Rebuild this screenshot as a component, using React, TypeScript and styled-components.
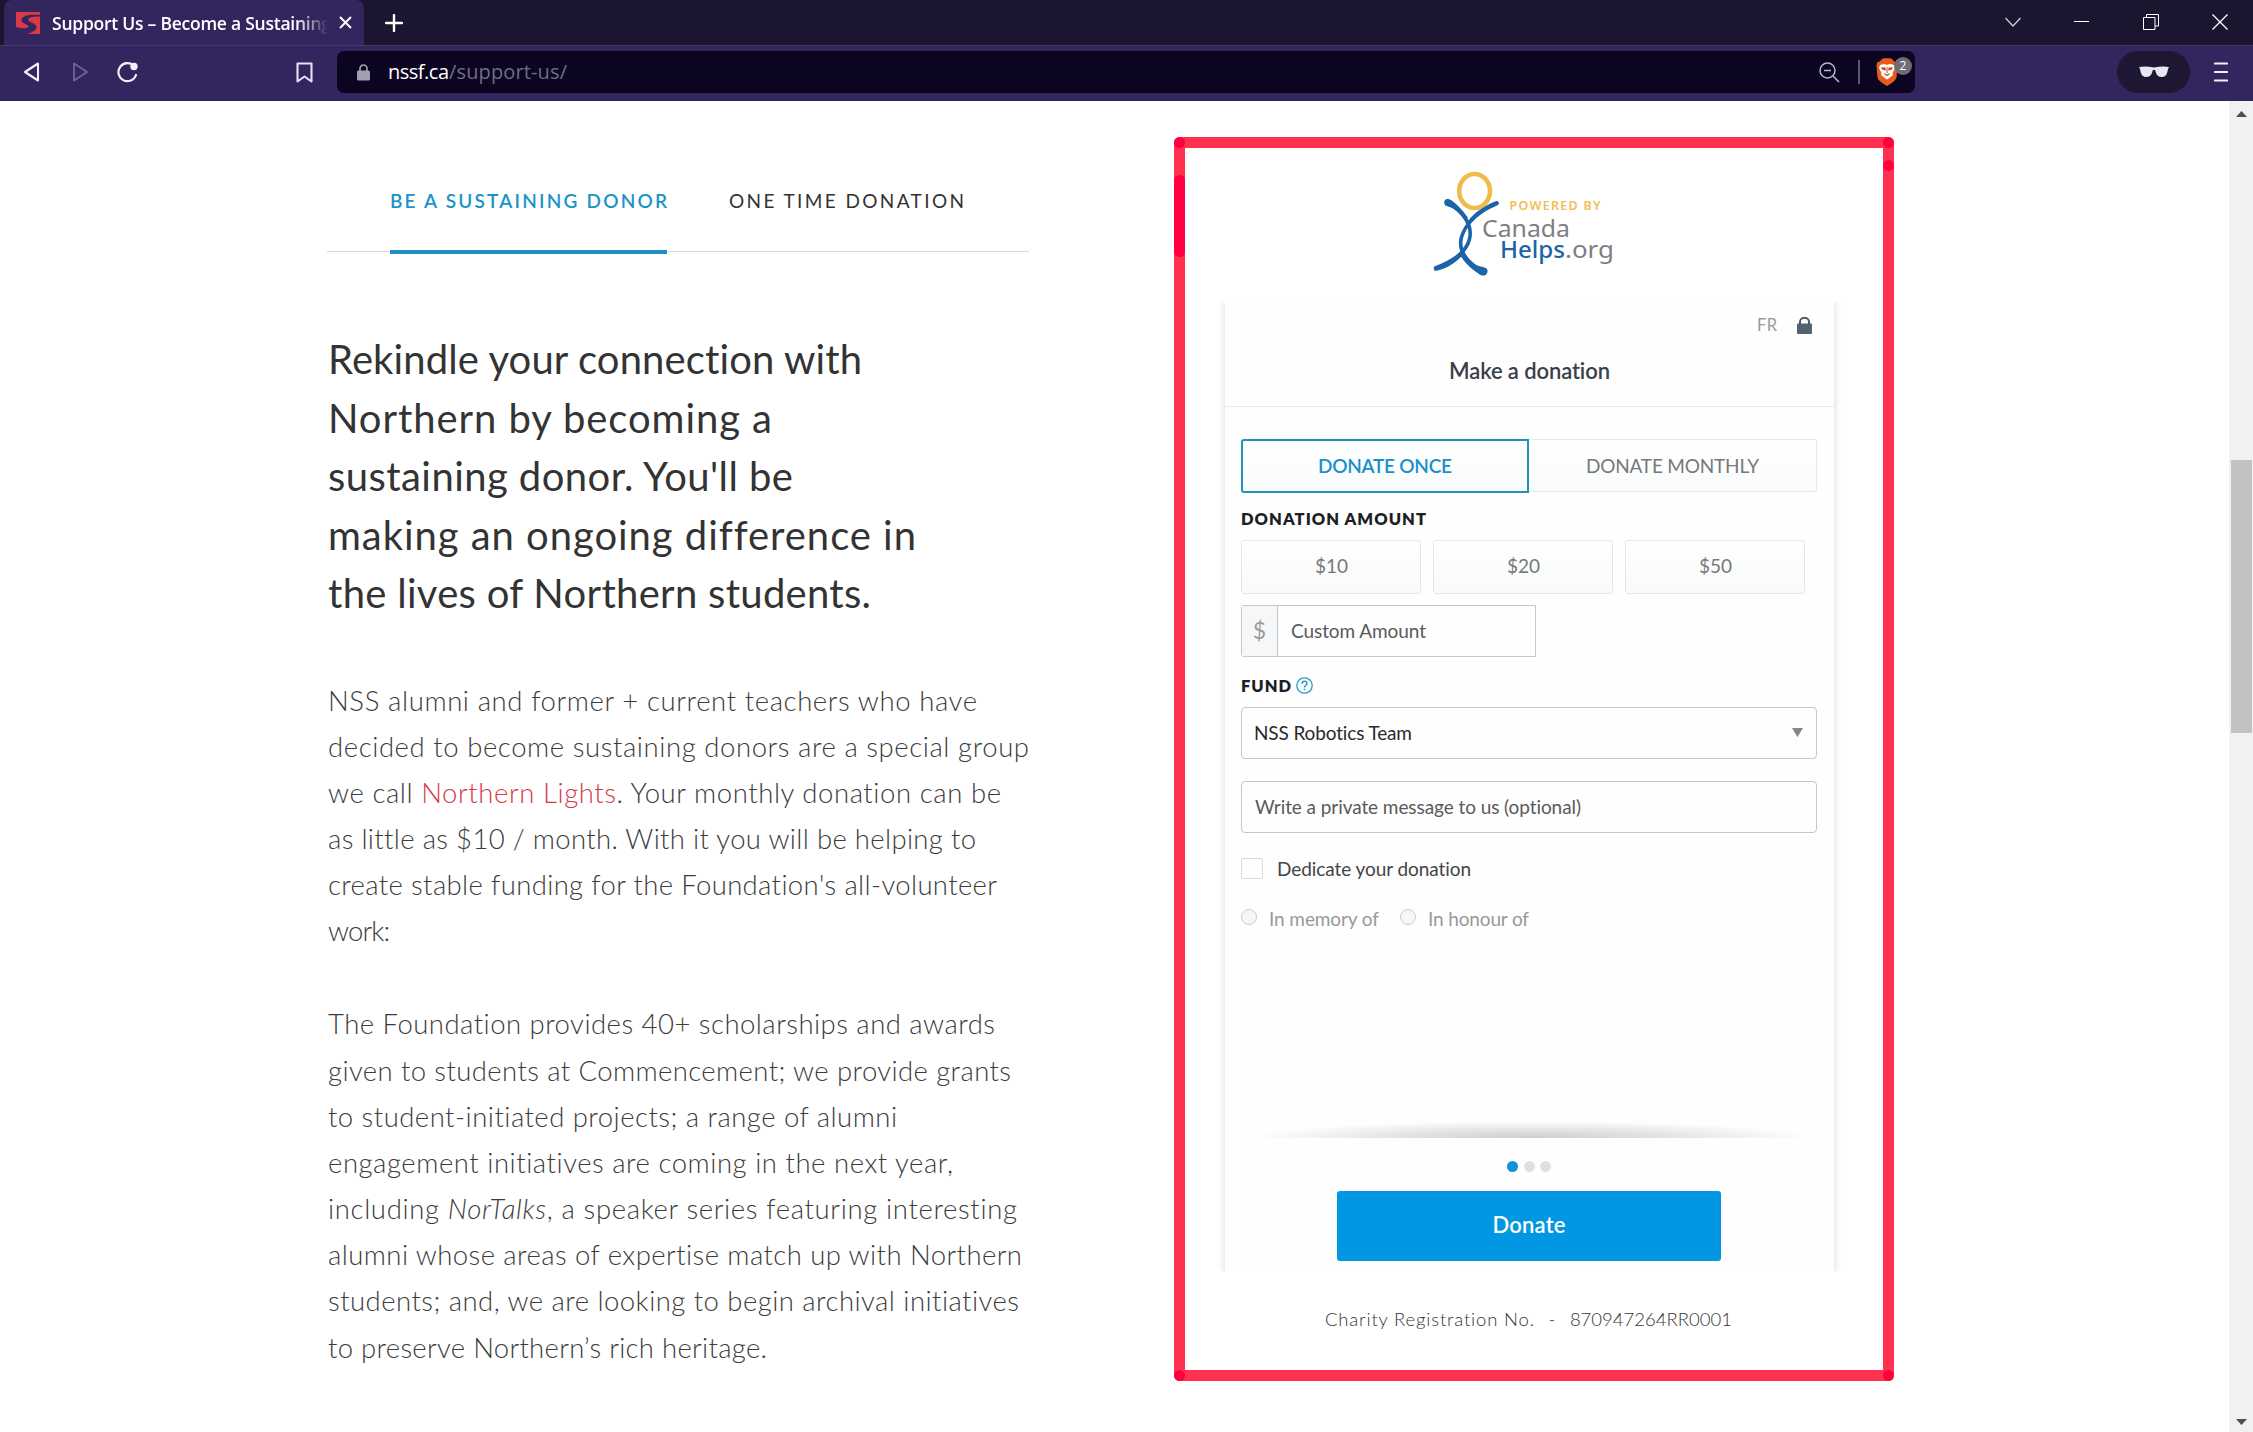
import React, { useLayoutEffect, useRef, useState } from 'react';
import styled, { createGlobalStyle } from 'styled-components';

const Global = createGlobalStyle`
  * { box-sizing: border-box; }
  html, body { margin: 0; padding: 0; background: #fff; overflow: hidden; }
  body { font-family: Lato, "Open Sans", sans-serif; }
  h1, h2, h3, p { margin: 0; font-weight: inherit; }
  svg { display: block; flex: none; }
`;

/* Text run tracked out (or in) so that it fills a given measure. */
const Run = styled.span`
  display: inline-block;
  white-space: nowrap;
  font-variant-ligatures: none;
  flex: none;
`;

function Fit({ width, children }: { width: number; children: React.ReactNode }) {
  const ref = useRef<HTMLSpanElement>(null);
  const [tracking, setTracking] = useState(0);
  useLayoutEffect(() => {
    const el = ref.current;
    if (!el) return;
    const count = (el.textContent || '').length;
    el.style.letterSpacing = '0px';
    el.style.marginRight = '0px';
    const natural = el.getBoundingClientRect().width;
    const next = (width - natural) / Math.max(1, count - 1);
    el.style.letterSpacing = `${next}px`;
    el.style.marginRight = `${-next}px`;
    setTracking(next);
  }, [width]);
  return (
    <Run ref={ref} style={{ letterSpacing: tracking, marginRight: -tracking }}>
      {children}
    </Run>
  );
}

const Window = styled.div`
  width: 2253px;
  height: 1432px;
  display: flex;
  flex-direction: column;
  overflow: hidden;
  background: #fff;
`;

/* ---------- browser chrome ---------- */
const TabStrip = styled.header`
  height: 45px;
  flex: none;
  display: flex;
  align-items: center;
  background: #1b1530;
  padding-left: 4px;
`;
const BrowserTab = styled.div`
  width: 360px;
  height: 45px;
  border-radius: 8px 8px 0 0;
  background: #33265f;
  display: flex;
  align-items: center;
  padding: 0 12px;
`;
const TabTitle = styled.div`
  width: 280px;
  margin-left: 12px;
  font: 600 17.5px/26px "Open Sans", "Noto Sans", sans-serif;
  color: #fff;
  mask-image: linear-gradient(90deg, #000 244px, transparent 276px);
`;
const TabClose = styled.svg`
  margin-left: 7px;
`;
const NewTab = styled.svg`
  margin-left: 21px;
`;
const WindowButtons = styled.div`
  margin-left: auto;
  display: flex;
  align-items: center;
  gap: 53px;
  padding-right: 25px;
  margin-top: -2px;
`;
const Toolbar = styled.div`
  height: 56px;
  flex: none;
  display: flex;
  align-items: center;
  background: #33265f;
  border-top: 1px solid #42366b;
  border-bottom: 1px solid #30255a;
  padding: 0 25px 2px 23px;
`;
const Nav = styled.div`
  width: 314px;
  display: flex;
  align-items: center;
`;
const Forward = styled.svg`
  margin-left: 32px;
`;
const Reload = styled.svg`
  margin-left: 28px;
`;
const Bookmark = styled.svg`
  margin-left: 157px;
`;
const AddressBar = styled.div`
  width: 1578px;
  height: 42px;
  border-radius: 7px;
  background: #0b0522;
  display: flex;
  align-items: center;
  padding: 0 15px 0 20px;
`;
const Address = styled.div`
  margin-left: 18px;
  flex: 1;
  display: flex;
  font: 400 20px/30px "Open Sans", "Noto Sans", sans-serif;
  color: #716d84;
`;
const Host = styled.span`
  color: #fff;
`;
const Rule = styled.div`
  width: 2px;
  height: 24px;
  margin: 0 16px 0 18px;
  background: #5d5970;
`;
const Shield = styled.div`
  position: relative;
  width: 24px;
  height: 28px;
`;
const ShieldCount = styled.span`
  position: absolute;
  left: 18px;
  top: -1px;
  width: 18px;
  height: 18px;
  border-radius: 9px;
  background: #6d6d75;
  color: #fff;
  text-align: center;
  font: 400 12px/17px "Open Sans", sans-serif;
`;
const Private = styled.div`
  margin-left: auto;
  width: 73px;
  height: 42px;
  border-radius: 21px;
  background: #1d1733;
  display: flex;
  align-items: center;
  justify-content: center;
`;
const MenuIcon = styled.svg`
  margin-left: 24px;
`;

/* ---------- page ---------- */
const Viewport = styled.main`
  flex: 1;
  display: flex;
  align-items: flex-start;
  padding-left: 327px;
`;
const Story = styled.section`
  width: 702px;
  color: #333;
`;
const Tabs = styled.nav`
  height: 151px;
  border-bottom: 1px solid #d8d8d8;
  display: flex;
  align-items: flex-end;
  padding-left: 63px;
`;
const Tab = styled.div<{ $active?: boolean }>`
  height: ${(p) => (p.$active ? 65 : 62)}px;
  margin-bottom: ${(p) => (p.$active ? -3 : 0)}px;
  margin-left: ${(p) => (p.$active ? 0 : 62)}px;
  border-bottom: ${(p) => (p.$active ? '4px solid #1f8fc1' : 'none')};
  color: ${(p) => (p.$active ? '#1b93c8' : '#333')};
  font-size: 19px;
  line-height: 24px;
  font-weight: ${(p) => (p.$active ? 600 : 400)};
`;
const Heading = styled.h1`
  margin-top: 78px;
  padding-left: 1px;
  font-size: 40px;
  line-height: 58.5px;
  font-weight: 400;
`;
const Paragraph = styled.p<{ $gap: number }>`
  margin-top: ${(p) => p.$gap}px;
  padding-left: 1px;
  font-size: 27.5px;
  line-height: 46.15px;
  font-weight: 300;
  color: #3c3c3c;
`;
const Line = styled.span`
  display: block;
`;
const Accent = styled.a`
  color: #d53a47;
`;

/* Red marker outline around the widget */
const Marked = styled.section`
  position: relative;
  width: 720px;
  height: 1244px;
  margin: 36px 0 0 145px;
  border: 11px solid #ff3150;
  border-radius: 6px;
`;
const Overlap = styled.i<{ $x: number; $y: number; $h?: number }>`
  position: absolute;
  left: ${(p) => p.$x - 11}px;
  top: ${(p) => p.$y - 11}px;
  width: 11px;
  height: ${(p) => p.$h || 11}px;
  border-radius: 6px;
  background: #ff0040;
`;
const LogoArea = styled.div`
  height: 154px;
  padding: 22px 0 0 248px;
`;
const Card = styled.div`
  width: 609px;
  height: 970px;
  margin-left: 40px;
  box-shadow: 0 0 8px rgba(0, 0, 0, 0.16);
  clip-path: inset(0 -9px 0 -9px);
  background: #fefefe;
`;
const CardHead = styled.div`
  height: 105px;
  border-bottom: 1px solid #e9ebec;
  padding-top: 13px;
`;
const Corner = styled.div`
  height: 20px;
  display: flex;
  justify-content: flex-end;
  align-items: center;
  gap: 20px;
  padding-right: 22px;
  font-size: 16.5px;
  line-height: 20px;
  color: #999;
`;
const CardTitle = styled.h2`
  margin-top: 21px;
  text-align: center;
  font-size: 22px;
  line-height: 30px;
  font-weight: 600;
  color: #3b3f49;
`;
const Form = styled.div`
  width: 576px;
  margin-left: 16px;
  padding-top: 32px;
  font-size: 19px;
  color: #444;
`;
const Toggle = styled.div`
  display: flex;
  height: 54px;
`;
const Choice = styled.div<{ $on?: boolean }>`
  width: 288px;
  height: ${(p) => (p.$on ? 54 : 53)}px;
  padding-bottom: ${(p) => (p.$on ? 2 : 0)}px;
  display: flex;
  align-items: center;
  justify-content: center;
  border: ${(p) => (p.$on ? '2px solid #1f93b8' : '1px solid #e5e8e9')};
  border-left-width: ${(p) => (p.$on ? 2 : 0)}px;
  border-radius: ${(p) => (p.$on ? '3px 0 0 3px' : '0 3px 3px 0')};
  background: linear-gradient(#fff, #fafbfc);
  color: ${(p) => (p.$on ? '#178fce' : '#75797c')};
  font-weight: ${(p) => (p.$on ? 600 : 400)};
`;
const FieldLabel = styled.h3<{ $top: number }>`
  margin-top: ${(p) => p.$top}px;
  margin-bottom: 11.5px;
  height: 20px;
  display: flex;
  align-items: center;
  gap: 5px;
  font-size: 16.5px;
  line-height: 20px;
  font-weight: 800;
  color: #1c1f24;
`;
const Amounts = styled.div`
  display: flex;
  gap: 12px;
`;
const Amount = styled.div`
  width: 180px;
  height: 54px;
  display: flex;
  align-items: center;
  justify-content: center;
  padding: 0 0 3px 1px;
  border: 1px solid #e4e7e8;
  border-radius: 3px;
  background: linear-gradient(#fff, #f9fafb);
  color: #75797c;
`;
const Custom = styled.div`
  width: 295px;
  height: 52px;
  margin-top: 11px;
  display: flex;
  align-items: center;
  border: 1px solid #c4c7c9;
  border-radius: 3px 0 0 3px;
  color: #5a5a5a;
`;
const CustomHint = styled.span`
  padding-bottom: 2px;
`;
const Currency = styled.div`
  width: 36px;
  height: 50px;
  margin-right: 13px;
  border-right: 1px solid #c4c7c9;
  background: #f6f7f9;
  display: flex;
  align-items: center;
  justify-content: center;
  padding-bottom: 2px;
  font-size: 23px;
  color: #9a9da0;
`;
const Field = styled.div<{ $top: number; $left: number; $color: string }>`
  margin-top: ${(p) => p.$top}px;
  height: 52px;
  border: 1px solid #c4c7c9;
  border-radius: 4px;
  display: flex;
  align-items: center;
  justify-content: space-between;
  padding: 0 13px 2px ${(p) => p.$left}px;
  color: ${(p) => p.$color};
`;
const CheckRow = styled.label`
  margin-top: 25px;
  height: 21px;
  display: flex;
  align-items: center;
  gap: 14px;
`;
const Box = styled.span`
  width: 22px;
  height: 21px;
  border: 1px solid #d8dadb;
  border-radius: 2px;
`;
const RadioRow = styled.div`
  margin-top: 29px;
  height: 18px;
  display: flex;
  align-items: center;
  color: #97999b;
`;
const Radio = styled.span<{ $left?: number }>`
  width: 16px;
  height: 16px;
  flex: none;
  margin-left: ${(p) => p.$left || 0}px;
  margin-right: 12px;
  border: 1px solid #cbcbcb;
  border-radius: 50%;
  background: #f6f6f6;
`;
const RadioText = styled.span`
  margin-top: 3px;
`;
const Curl = styled.div`
  width: 566px;
  height: 17px;
  margin: 195px 0 0 8px;
  background: radial-gradient(ellipse 50% 100% at 50% 100%, rgba(0, 0, 0, 0.19), rgba(0, 0, 0, 0.1) 50%, rgba(0, 0, 0, 0.04) 80%, transparent);
`;
const Dots = styled.div`
  margin-top: 23px;
  display: flex;
  justify-content: center;
  gap: 5.5px;
`;
const Dot = styled.i<{ $on?: boolean }>`
  width: 11px;
  height: 11px;
  border-radius: 50%;
  background: ${(p) => (p.$on ? '#0e94d8' : '#dfe1e1')};
`;
const Donate = styled.div`
  width: 384px;
  height: 70px;
  margin: 19px auto 0;
  padding-bottom: 3px;
  border-radius: 3px;
  background: #0297e3;
  color: #fff;
  display: flex;
  align-items: center;
  justify-content: center;
  font-size: 22px;
  font-weight: 600;
`;
const Charity = styled.div`
  margin: 35px 0 0 140px;
  display: flex;
  gap: 14.5px;
  font-size: 18.5px;
  line-height: 24px;
  font-weight: 300;
  color: #333;
`;
const Scrollbar = styled.aside`
  width: 24px;
  height: 1331px;
  margin-left: auto;
  background: #f1f1f1;
  display: flex;
  flex-direction: column;
  align-items: center;
  justify-content: space-between;
  padding: 10px 0 7px;
`;
const Thumb = styled.div`
  width: 21px;
  height: 273px;
  margin-bottom: 343px;
  background: #c1c1c1;
`;

const headingLines: [string, number][] = [
  ['Rekindle your connection with', 534],
  ['Northern by becoming a', 444],
  ["sustaining donor. You'll be", 465],
  ['making an ongoing difference in', 588],
  ['the lives of Northern students.', 543],
];

const introLines: [React.ReactNode, number][] = [
  ['NSS alumni and former + current teachers who have', 649],
  ['decided to become sustaining donors are a special group', 701],
  [<>we call <Accent>Northern Lights</Accent>. Your monthly donation can be</>, 673],
  ['as little as $10 / month. With it you will be helping to', 648],
  ["create stable funding for the Foundation's all-volunteer", 669],
  ['work:', 62],
];

const aboutLines: [React.ReactNode, number][] = [
  ['The Foundation provides 40+ scholarships and awards', 667],
  ['given to students at Commencement; we provide grants', 683],
  ['to student-initiated projects; a range of alumni', 569],
  ['engagement initiatives are coming in the next year,', 625],
  [<>including <em>NorTalks</em>, a speaker series featuring interesting</>, 689],
  ['alumni whose areas of expertise match up with Northern', 694],
  ['students; and, we are looking to begin archival initiatives', 691],
  ['to preserve Northern’s rich heritage.', 439],
];

const Lines = ({ items }: { items: [React.ReactNode, number][] }) => (
  <>
    {items.map(([text, width], i) => (
      <Line key={i}>
        <Fit width={width}>{text}</Fit>
      </Line>
    ))}
  </>
);

const Logo = () => (
  <svg width="186" height="112" viewBox="1433 170 186 112">
    <ellipse cx="1474.6" cy="191" rx="15.4" ry="17" fill="none" stroke="#efbc4b" strokeWidth="4.6" />
    <g fill="none" stroke="#1c63a8" strokeLinecap="round">
      <path d="M1497 203C1481 210 1466 222 1461.500 237C1458.500 248 1463 259 1480 270" strokeWidth="3.600" />
      <path d="M1448 202.500C1463 212 1473 225 1469.500 239C1466 254 1450 262 1435.500 268" strokeWidth="3.600" />
    </g>
    <g fill="#1c63a8">
      <path d="M1444.500 204C1443 199.500 1447.500 197.500 1451 200C1457 204.500 1463 210 1468 218L1465.500 220C1460 213 1454 208 1448 206.500C1446.500 206 1445 205.500 1444.500 204Z" />
      <path d="M1498.500 203C1498 201 1496 201 1494 202C1484 206 1475 212 1468 221L1470 223C1478 214 1487 210 1497 205.500C1498 205 1499 204 1498.500 203Z" />
      <path d="M1461 251C1465 260 1473 265 1483 267C1488 268 1488.500 271 1486.500 274C1485 276 1482 276 1479 274C1470 268 1463 261 1459 253Z" />
      <path d="M1461 252C1452 261 1444 265 1434.500 267.500V271C1446 269.500 1455 263 1463 255Z" />
    </g>
    <g fontFamily='"Noto Sans", "Open Sans", sans-serif'>
      <text x="1509.500" y="209.500" fontSize="12.500" fontWeight="600" fill="#f0c056" textLength="91">POWERED BY</text>
      <text x="1482" y="237" fontSize="24" fill="#7d7f82" textLength="88" lengthAdjust="spacingAndGlyphs">Canada</text>
      <text x="1500" y="257.500" fontSize="23.500" fontWeight="500" fill="#1c63a8" textLength="65" lengthAdjust="spacingAndGlyphs">Helps</text>
      <text x="1565" y="257.500" fontSize="23.500" fill="#7d7f82" textLength="49" lengthAdjust="spacingAndGlyphs">.org</text>
    </g>
  </svg>
);

const LionShield = () => (
  <svg width="22" height="28" viewBox="0 0 22 28">
    <path d="M6 1L8 .300H14L16 1L18 3.200L21 4.500L21.500 8L20.500 19.500C20 21.500 18 23.500 15 25.500L11 28L7 25.500C4 23.500 2 21.500 1.500 19.500L.500 8L1 4.500L4 3.200Z" fill="#ea5a1c" />
    <path d="M4 7L8 6L11 6.800L14 6L18 7L19 10L16.500 15L17 17L14 19.500L11 21.500L8 19.500L5 17L5.500 15L3 10Z" fill="#fff" />
    <path d="M5 9.500L9 9.300L10 11.500L9.300 12.500L6 11.500ZM17 9.500L13 9.300L12 11.500L12.700 12.500L16 11.500ZM8 15L11 16.500L14 15L13 17L11 18L9 17ZM10.500 9H11.500V15H10.500Z" fill="#c94a17" />
  </svg>
);

export default function App() {
  return (
    <Window>
      <Global />
      <TabStrip>
        <BrowserTab>
          <svg width="24" height="22" viewBox="0 0 24 22">
            <path d="M0 0H24V22H0Z" fill="#d73a48" />
            <path d="M24 3C14 2 5 3.500 5.500 8.500C6 12 13 12 12.500 15C11 17 5 16.500 0 15V22H11C18 20 22 17 20 13.500C18 10.500 12 10 12 7.500C12.500 5 18 4.200 24 4.500Z" fill="#33265f" />
          </svg>
          <TabTitle><Fit width={279}>Support Us – Become a Sustaining</Fit></TabTitle>
          <TabClose width="13" height="13" viewBox="0 0 13 13" stroke="#fff" strokeWidth="2"><path d="M1 1L12 12M12 1L1 12" /></TabClose>
        </BrowserTab>
        <NewTab width="18" height="18" viewBox="0 0 18 18" stroke="#fff" strokeWidth="2.400" strokeLinecap="round"><path d="M9 1V17M1 9H17" /></NewTab>
        <WindowButtons>
          <svg width="16" height="16" viewBox="0 0 16 16" fill="none" stroke="#d5d3da" strokeWidth="1.200"><path d="M0.500 4L8 12L15.500 4" /></svg>
          <svg width="16" height="16" viewBox="0 0 16 16" fill="none" stroke="#fff"><path d="M0 7.500H15" /></svg>
          <svg width="16" height="16" viewBox="0 0 16 16" fill="none" stroke="#fff"><path d="M.5 3.500H12V15.500H.5ZM3.500 3.500V.5H15.500V12H12" /></svg>
          <svg width="16" height="16" viewBox="0 0 16 16" fill="none" stroke="#fff" strokeWidth="1.300"><path d="M.5 .5L15.500 15.500M15.500 .5L.5 15.500" /></svg>
        </WindowButtons>
      </TabStrip>
      <Toolbar>
        <Nav>
          <svg width="17" height="20" viewBox="0 0 17 20" fill="none" stroke="#f1eff8" strokeWidth="2.100" strokeLinejoin="round"><path d="M15 1.500V18.500L2 10Z" /></svg>
          <Forward width="17" height="20" viewBox="0 0 17 20" fill="none" stroke="#6f6396" strokeWidth="1.800" strokeLinejoin="round"><path d="M2 1.500V18.500L15 10Z" /></Forward>
          <Reload width="22" height="22" viewBox="0 0 22 22"><path d="M17 5A9 9 0 1 0 19 14" fill="none" stroke="#f1eff8" strokeWidth="2.200" strokeLinecap="round" /><circle cx="17" cy="5.500" r="3.700" fill="#f1eff8" /></Reload>
          <Bookmark width="17" height="21" viewBox="0 0 17 21" fill="none" stroke="#e6e1f5" strokeWidth="2.100" strokeLinejoin="round"><path d="M1.500 1.500H15.500V19.500L8.500 14.500L1.500 19.500Z" /></Bookmark>
        </Nav>
        <AddressBar>
          <svg width="13" height="17" viewBox="0 0 13 17"><rect y="6.500" width="13" height="10" rx="1.500" fill="#a29fb0" /><path d="M3 7V4.500A3.500 3.500 0 0 1 10 4.500V7" fill="none" stroke="#a29fb0" strokeWidth="1.700" /></svg>
          <Address><Host><Fit width={61}>nssf.ca</Fit></Host><Fit width={118}>/support-us/</Fit></Address>
          <svg width="21" height="21" viewBox="0 0 21 21" fill="none" stroke="#b8b5c6" strokeWidth="1.500"><circle cx="8.500" cy="8.500" r="7.500" /><path d="M14 14L20 20M5 8.500H12" /></svg>
          <Rule />
          <Shield>
            <LionShield />
            <ShieldCount>2</ShieldCount>
          </Shield>
        </AddressBar>
        <Private>
          <svg width="30" height="12" viewBox="0 0 30 12"><path d="M0 1Q7 0 15 1.500Q23 0 30 1L29 3C28 9 26.500 11 22.500 11C18.500 11 17 8 16.200 4H13.800C13 8 11.500 11 7.500 11C3.500 11 2 9 1 3Z" fill="#e9e6f2" /></svg>
        </Private>
        <MenuIcon width="14" height="20" viewBox="0 0 14 20" stroke="#f1eff8" strokeWidth="2.100" strokeLinecap="round"><path d="M1 1.500H13M1 10H13M1 18.500H13" /></MenuIcon>
      </Toolbar>
      <Viewport>
        <Story>
          <Tabs>
            <Tab $active><Fit width={277}>BE A SUSTAINING DONOR</Fit></Tab>
            <Tab><Fit width={235}>ONE TIME DONATION</Fit></Tab>
          </Tabs>
          <Heading><Lines items={headingLines} /></Heading>
          <Paragraph $gap={55}><Lines items={introLines} /></Paragraph>
          <Paragraph $gap={47}><Lines items={aboutLines} /></Paragraph>
        </Story>
        <Marked>
          <Overlap $x={0} $y={0} />
          <Overlap $x={709} $y={0} />
          <Overlap $x={0} $y={38} $h={82} />
          <Overlap $x={709} $y={23} />
          <Overlap $x={0} $y={1233} />
          <Overlap $x={709} $y={1233} />
          <LogoArea><Logo /></LogoArea>
          <Card>
            <CardHead>
              <Corner>
                <Fit width={20}>FR</Fit>
                <svg width="15" height="17" viewBox="0 0 15 17"><rect y="6.500" width="15" height="10.500" rx="1" fill="#526272" /><path d="M3 7V5A4.500 4.200 0 0 1 12 5V7" fill="none" stroke="#4c5560" strokeWidth="2" /></svg>
              </Corner>
              <CardTitle><Fit width={161}>Make a donation</Fit></CardTitle>
            </CardHead>
            <Form>
              <Toggle>
                <Choice $on><Fit width={134}>DONATE ONCE</Fit></Choice>
                <Choice><Fit width={173}>DONATE MONTHLY</Fit></Choice>
              </Toggle>
              <FieldLabel $top={15.5}><Fit width={185}>DONATION AMOUNT</Fit></FieldLabel>
              <Amounts>
                <Amount><Fit width={33}>$10</Fit></Amount>
                <Amount><Fit width={33}>$20</Fit></Amount>
                <Amount><Fit width={33}>$50</Fit></Amount>
              </Amounts>
              <Custom>
                <Currency>$</Currency>
                <CustomHint><Fit width={135}>Custom Amount</Fit></CustomHint>
              </Custom>
              <FieldLabel $top={18.5}>
                <Fit width={50}>FUND</Fit>
                <svg width="17" height="17" viewBox="0 0 17 17" fill="none" stroke="#2a9cc4" strokeWidth="1.300"><circle cx="8.500" cy="8.500" r="7.700" /><path d="M6 6.800C6 3.400 11 3.500 11 6.600C11 8.500 8.500 8.400 8.500 10.500M8.500 11.800V13.300" strokeWidth="1.500" /></svg>
              </FieldLabel>
              <Field $top={0} $left={12} $color="#2a2a2a">
                <Fit width={158}>NSS Robotics Team</Fit>
                <svg width="11" height="9" viewBox="0 0 11 9"><path d="M0 0H11L5.500 9Z" fill="#858585" /></svg>
              </Field>
              <Field $top={22} $left={13} $color="#5a5a5a"><Fit width={326}>Write a private message to us (optional)</Fit></Field>
              <CheckRow><Box /><Fit width={194}>Dedicate your donation</Fit></CheckRow>
              <RadioRow>
                <Radio /><RadioText><Fit width={110}>In memory of</Fit></RadioText>
                <Radio $left={21} /><RadioText><Fit width={101}>In honour of</Fit></RadioText>
              </RadioRow>
              <Curl />
              <Dots><Dot $on /><Dot /><Dot /></Dots>
              <Donate><Fit width={73}>Donate</Fit></Donate>
            </Form>
          </Card>
          <Charity>
            <Fit width={209}>Charity Registration No.</Fit>
            <span>-</span>
            <Fit width={162}>870947264RR0001</Fit>
          </Charity>
        </Marked>
        <Scrollbar>
          <svg width="11" height="6" viewBox="0 0 11 6"><path d="M0 6L5.500 0L11 6Z" fill="#505050" /></svg>
          <Thumb />
          <svg width="11" height="6" viewBox="0 0 11 6"><path d="M0 0L5.500 6L11 0Z" fill="#505050" /></svg>
        </Scrollbar>
      </Viewport>
    </Window>
  );
}
